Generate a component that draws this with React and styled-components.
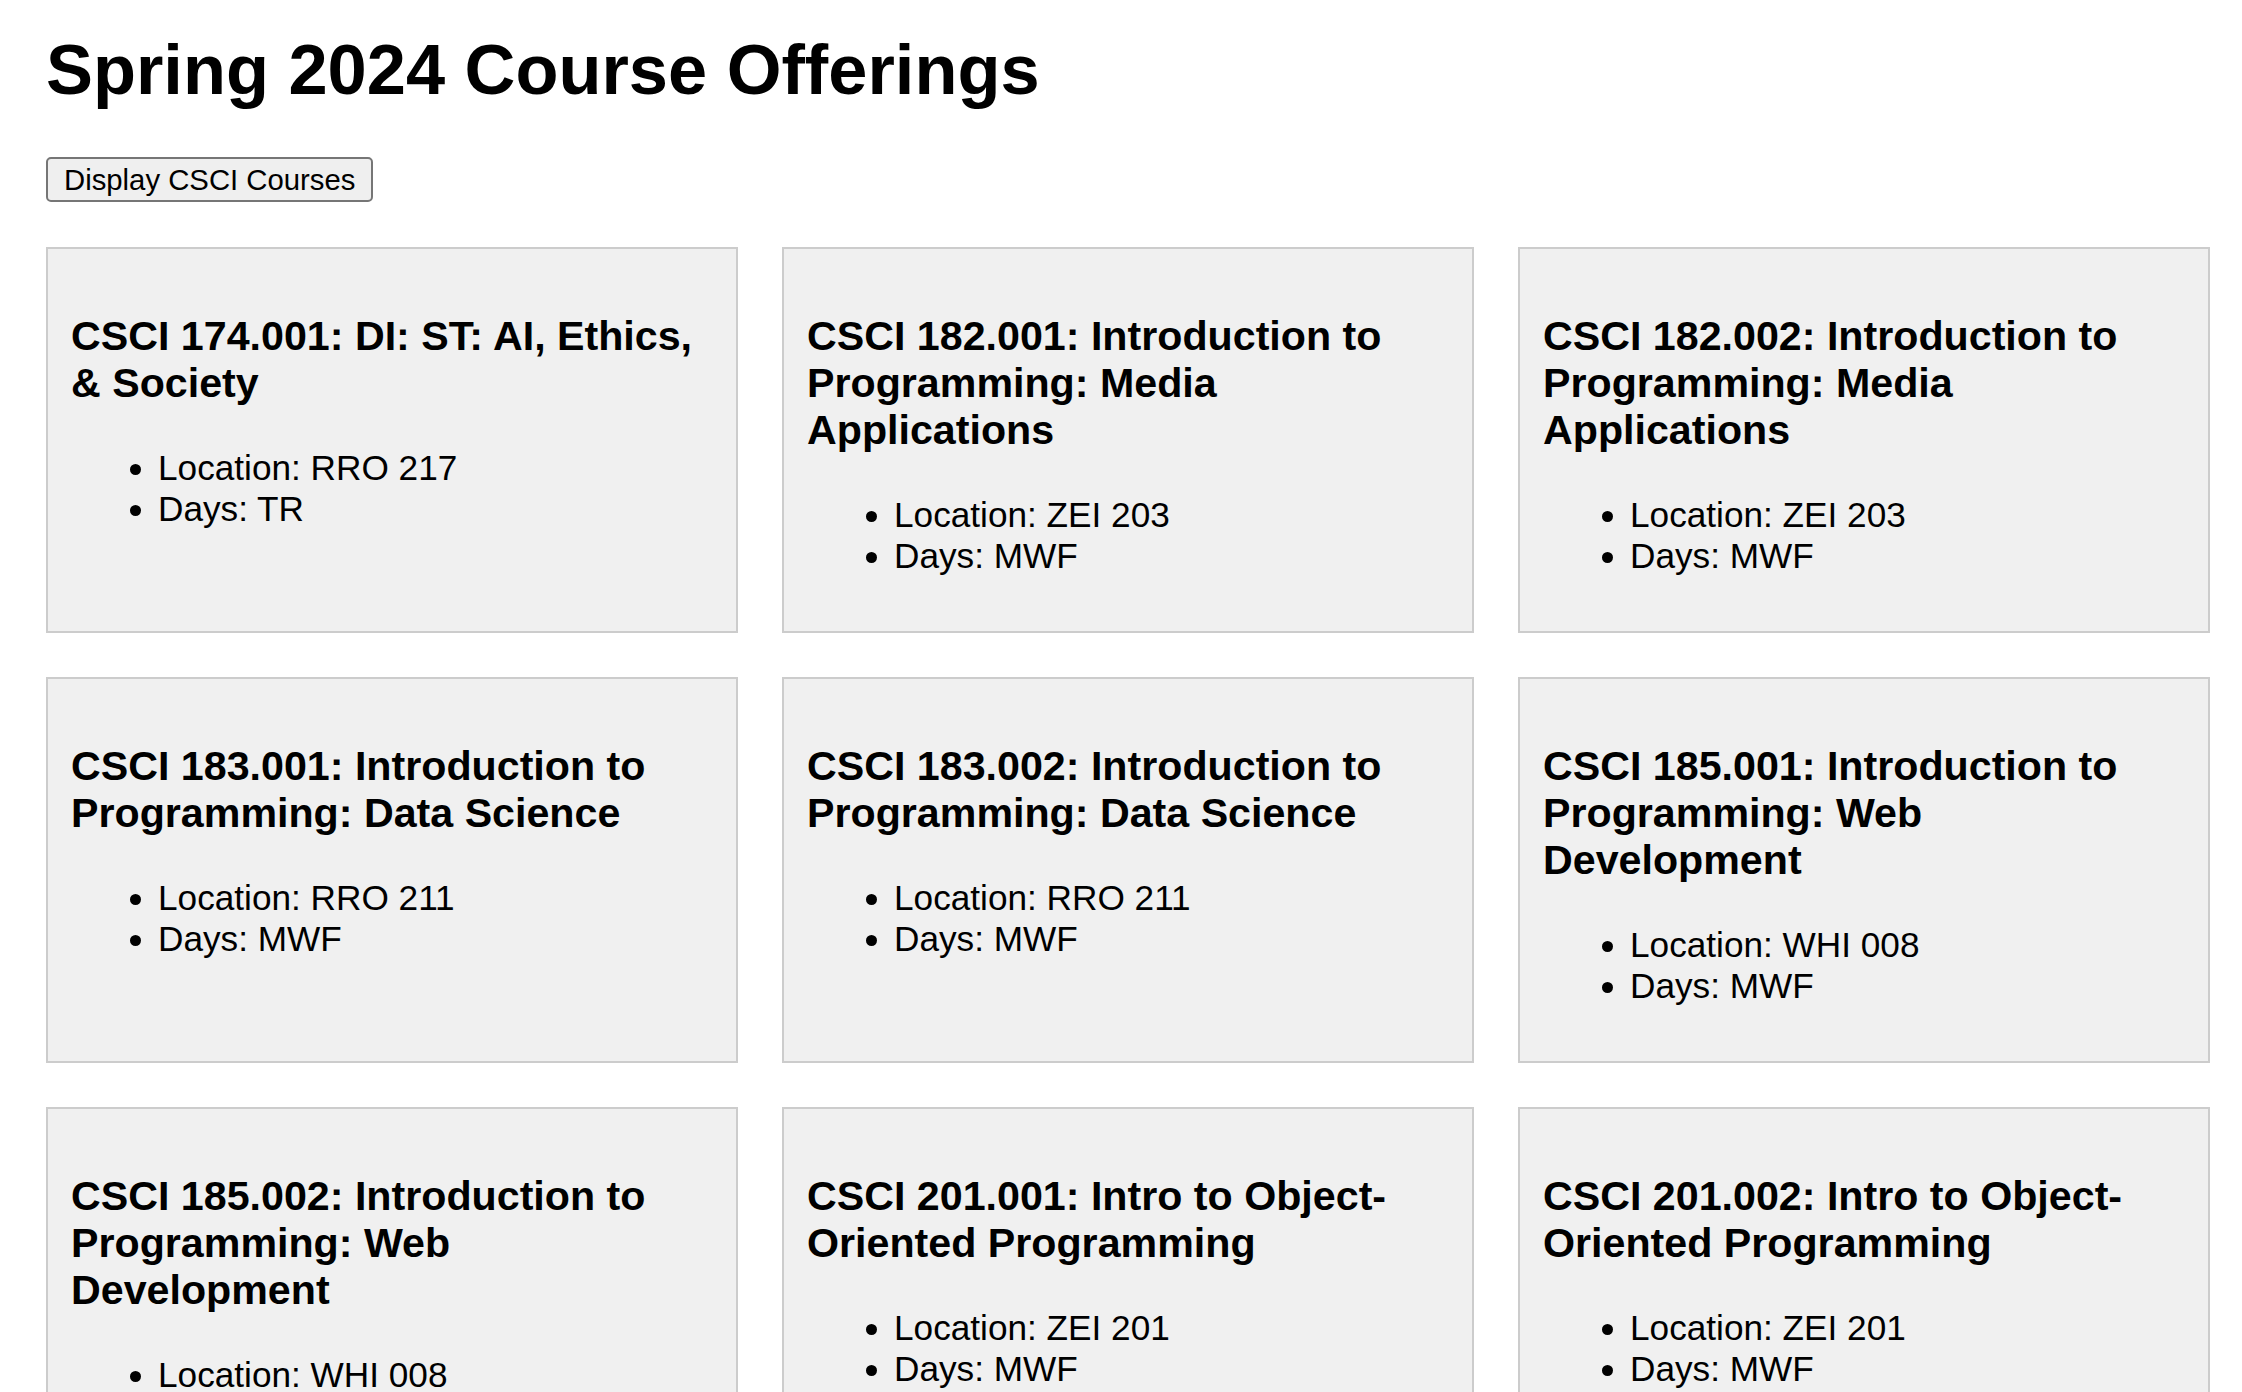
import React from 'react'
import styled, { createGlobalStyle } from 'styled-components'

const courses = [
  { id: 'CSCI 174.001', title: 'DI: ST: AI, Ethics, & Society', location: 'RRO 217', days: 'TR' },
  { id: 'CSCI 182.001', title: 'Introduction to Programming: Media Applications', location: 'ZEI 203', days: 'MWF' },
  { id: 'CSCI 182.002', title: 'Introduction to Programming: Media Applications', location: 'ZEI 203', days: 'MWF' },
  { id: 'CSCI 183.001', title: 'Introduction to Programming: Data Science', location: 'RRO 211', days: 'MWF' },
  { id: 'CSCI 183.002', title: 'Introduction to Programming: Data Science', location: 'RRO 211', days: 'MWF' },
  { id: 'CSCI 185.001', title: 'Introduction to Programming: Web Development', location: 'WHI 008', days: 'MWF' },
  { id: 'CSCI 185.002', title: 'Introduction to Programming: Web Development', location: 'WHI 008', days: 'MWF' },
  { id: 'CSCI 201.001', title: 'Intro to Object-Oriented Programming', location: 'ZEI 201', days: 'MWF' },
  { id: 'CSCI 201.002', title: 'Intro to Object-Oriented Programming', location: 'ZEI 201', days: 'MWF' },
]

const App = () => (
  <>
    <GlobalStyle />
    <Root>
      <Title>Spring 2024 Course Offerings</Title>
      <Toolbar>
        <DisplayButton>Display CSCI Courses</DisplayButton>
      </Toolbar>
      <CourseGrid>
        {courses.map(c => (
          <Card key={c.id}>
            <CourseTitle>
              {c.id}: {c.title}
            </CourseTitle>
            <Details>
              <li>Location: {c.location}</li>
              <li>Days: {c.days}</li>
            </Details>
          </Card>
        ))}
      </CourseGrid>
    </Root>
  </>
)

export default App

// #region styled-components
const GlobalStyle = createGlobalStyle`
  body {
    margin: 0;
    background: #fff;
    color: #000;
    font-family: 'Liberation Sans', Arial, Helvetica, sans-serif;
    font-size: 35.2px;
  }
`

const Root = styled.div`
  padding: 29px 32px 40px 46px;
`

const Title = styled.h1`
  font-size: 70.4px;
  font-weight: 700;
  margin: 0 0 47px;
  line-height: normal;
`

const Toolbar = styled.div`
  display: flex;
`

const DisplayButton = styled.button`
  height: 45px;
  padding: 0 16px;
  border: 2px solid #767676;
  border-radius: 5px;
  background-color: #efefef;
  color: #000;
  font-family: 'Liberation Sans', Arial, Helvetica, sans-serif;
  font-size: 29.3px;
`

const CourseGrid = styled.div`
  display: grid;
  grid-template-columns: repeat(3, 692px);
  gap: 44px;
  margin-top: 45px;
`

const Card = styled.div`
  background-color: #f0f0f0;
  border: 2px solid #cccccc;
  padding: 23px 21px 19px 23px;
  min-height: 386px;
  box-sizing: border-box;
  display: flow-root;
`

const CourseTitle = styled.h3`
  font-size: 41.2px;
  font-weight: 700;
  margin: 41.2px 0;
  line-height: normal;
`

const Details = styled.ul`
  margin: 35.2px 0;
  padding-left: 87px;
  line-height: normal;
  list-style: disc;

  li + li {
    margin-top: 1px;
  }
`
// #endregion
